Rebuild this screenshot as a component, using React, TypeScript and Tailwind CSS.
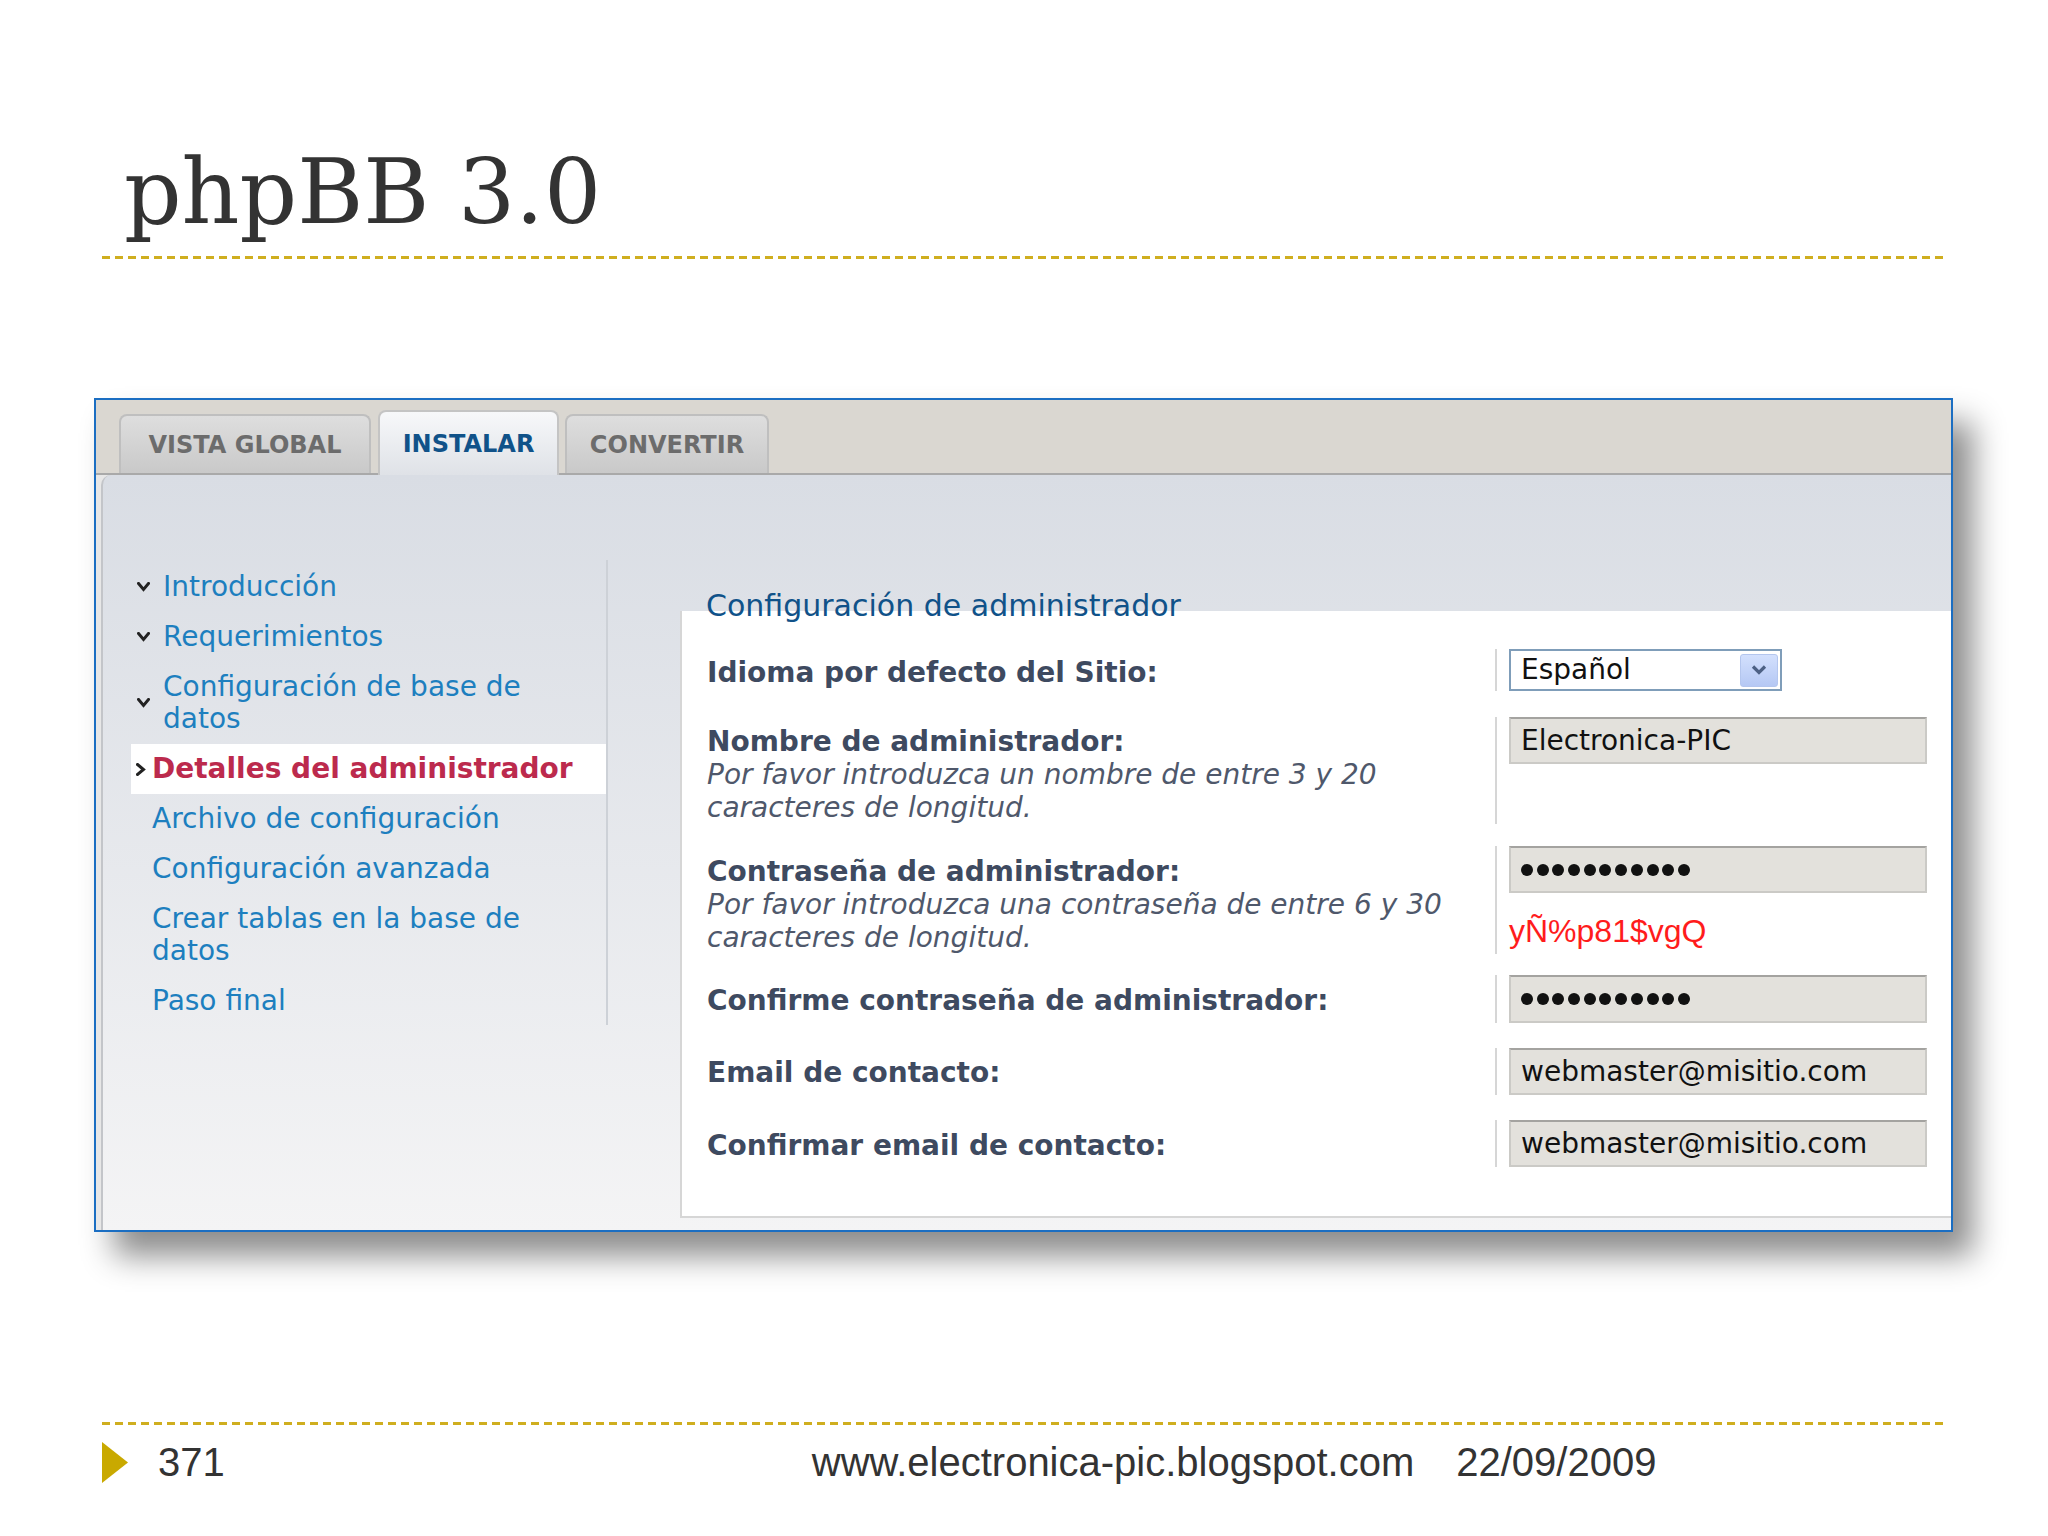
import React from "react";

const ui = "font-['DejaVu_Sans',Verdana,sans-serif]";

function ChevronDown() {
  return (
    <svg width="13" height="10" viewBox="0 0 13 10" className="shrink-0">
      <path d="M1.5 1.5 L6.5 7.5 L11.5 1.5" fill="none" stroke="#222" strokeWidth="3" strokeLinecap="square" />
    </svg>
  );
}

function ChevronRight() {
  return (
    <svg width="10" height="13" viewBox="0 0 10 13" className="shrink-0">
      <path d="M1.5 1.5 L7.5 6.5 L1.5 11.5" fill="none" stroke="#222" strokeWidth="3" strokeLinecap="square" />
    </svg>
  );
}

type MenuItem = { lines: string[]; kind: "done" | "active" | "todo" };

const menu: MenuItem[] = [
  { lines: ["Introducción"], kind: "done" },
  { lines: ["Requerimientos"], kind: "done" },
  { lines: ["Configuración de base de", "datos"], kind: "done" },
  { lines: ["Detalles del administrador"], kind: "active" },
  { lines: ["Archivo de configuración"], kind: "todo" },
  { lines: ["Configuración avanzada"], kind: "todo" },
  { lines: ["Crear tablas en la base de", "datos"], kind: "todo" },
  { lines: ["Paso final"], kind: "todo" },
];

function Dots() {
  return (
    <div className="flex items-center gap-[3.7px]">
      {Array.from({ length: 11 }).map((_, i) => (
        <span key={i} className="block h-[12px] w-[12px] rounded-full bg-[#111]" />
      ))}
    </div>
  );
}

function TextBox({ children, h = "h-[47px]" }: { children: React.ReactNode; h?: string }) {
  return (
    <div
      className={`flex w-[418px] items-center border-2 border-[#cbcac6] border-t-[#a4a3a0] bg-[#e3e1dc] pl-[10px] text-[28px] leading-none text-[#111] ${h}`}
    >
      {children}
    </div>
  );
}

function Row({
  label,
  help,
  labelPad,
  mt,
  children,
}: {
  label: string;
  help?: string[];
  labelPad: string;
  mt: string;
  children: React.ReactNode;
}) {
  return (
    <div className={`flex ${mt}`}>
      <div className={`flex-1 pl-[25px] ${labelPad}`}>
        <div className="text-[28px] font-bold leading-[32px] text-[#3e4a60]">{label}</div>
        {help?.map((l) => (
          <div key={l} className="text-[28px] italic leading-[33px] text-[#4f586b]">
            {l}
          </div>
        ))}
      </div>
      <div className="w-[456px] border-l-2 border-[#d6d6d6] pl-[12px] pr-[24px]">{children}</div>
    </div>
  );
}

export default function App() {
  return (
    <div className="flex h-[1536px] w-[2048px] flex-col overflow-hidden bg-white">
      <div className="mt-[142px] pl-[124px] font-['DejaVu_Serif',serif] text-[90px] leading-[100px] text-[#333]">
        phpBB 3.0
      </div>
      <div className="ml-[102px] mt-[14px] h-[3px] w-[1844px] bg-[repeating-linear-gradient(90deg,#cfae1f_0px,#cfae1f_8px,transparent_8px,transparent_13px)]" />

      {/* installer window */}
      <div
        className={`ml-[94px] mt-[139px] flex h-[834px] w-[1859px] flex-col border-2 border-[#1b6ec2] shadow-[20px_24px_30px_rgba(0,0,0,0.45)] ${ui}`}
      >
        <div className="flex h-[75px] items-end gap-[7px] border-b-2 border-[#a9a9a9] bg-[#dad7d1] pl-[23px]">
          <div className="flex h-[59px] w-[252px] items-center justify-center rounded-t-[8px] border-2 border-b-0 border-[#bfbfbf] bg-gradient-to-b from-[#dedede] to-[#c9c9c9] text-[24px] font-bold text-[#6c6c6c]">
            VISTA GLOBAL
          </div>
          <div className="relative z-10 -mb-[2px] flex h-[65px] w-[181px] items-center justify-center rounded-t-[8px] border-2 border-b-0 border-[#c4c4c4] bg-gradient-to-b from-[#f7f8fa] to-[#dfe2e7] text-[24px] font-bold text-[#105289]">
            INSTALAR
          </div>
          <div className="-ml-[1px] flex h-[59px] w-[204px] items-center justify-center rounded-t-[8px] border-2 border-b-0 border-[#bfbfbf] bg-gradient-to-b from-[#dedede] to-[#c9c9c9] text-[24px] font-bold text-[#6c6c6c]">
            CONVERTIR
          </div>
        </div>

        <div className="flex flex-1 bg-[#e7e7e7] pl-[5px]">
          <div className="flex flex-1 rounded-tl-[10px] border-l-2 border-[#c3c5c9] bg-gradient-to-b from-[#d9dde4] to-[#f4f4f5]">
            {/* left menu */}
            <div className="w-[505px] pl-[28px] pt-[85px]">
              <div className="h-[465px] border-r-2 border-[#cdd1d7] pt-[2px]">
                {menu.map((m) => {
                  if (m.kind === "active") {
                    return (
                      <div key={m.lines[0]} className="flex items-center bg-white py-[9px] pl-[5px]">
                        <ChevronRight />
                        <span className="ml-[6px] whitespace-nowrap text-[28px] font-bold leading-[32px] text-[#bc2a4d]">
                          {m.lines[0]}
                        </span>
                      </div>
                    );
                  }
                  if (m.kind === "done") {
                    return (
                      <div key={m.lines[0]} className="flex items-center py-[9px] pl-[6px]">
                        <ChevronDown />
                        <span className="ml-[13px] whitespace-nowrap text-[28px] leading-[32px] text-[#1d7fbf]">
                          {m.lines.map((l, i) => (
                            <span key={i} className="block">
                              {l}
                            </span>
                          ))}
                        </span>
                      </div>
                    );
                  }
                  return (
                    <div key={m.lines[0]} className="whitespace-nowrap py-[9px] pl-[21px] text-[28px] leading-[32px] text-[#1d7fbf]">
                      {m.lines.map((l, i) => (
                        <span key={i} className="block">
                          {l}
                        </span>
                      ))}
                    </div>
                  );
                })}
              </div>
            </div>

            {/* right form */}
            <div className="flex flex-1 flex-col pl-[72px] pt-[113px]">
              <div className="relative z-10 -mb-[13px] pl-[26px] text-[30px] leading-[36px] text-[#105289]">
                Configuración de administrador
              </div>
              <div className="h-[607px] border-b-2 border-l-2 border-[#d6d6d6] bg-white pt-[38px]">
                <Row label="Idioma por defecto del Sitio:" labelPad="pt-[8px]" mt="mt-0">
                  <div className="flex h-[42px] w-[273px] items-center justify-between border-2 border-[#7f9db9] bg-white pl-[10px] pr-[2px]">
                    <span className="text-[28px] leading-none text-[#111]">Español</span>
                    <span className="flex h-[33px] w-[38px] items-center justify-center rounded-[3px] border border-[#b4c6ee] bg-gradient-to-b from-[#d3e0fd] to-[#b5c8f4]">
                      <svg width="18" height="12" viewBox="0 0 18 12">
                        <path d="M3 2.5 L9 8.5 L15 2.5" fill="none" stroke="#4d6185" strokeWidth="3.2" />
                      </svg>
                    </span>
                  </div>
                </Row>
                <Row
                  label="Nombre de administrador:"
                  help={["Por favor introduzca un nombre de entre 3 y 20", "caracteres de longitud."]}
                  labelPad="pt-[9px]"
                  mt="mt-[26px]"
                >
                  <TextBox>Electronica-PIC</TextBox>
                </Row>
                <Row
                  label="Contraseña de administrador:"
                  help={["Por favor introduzca una contraseña de entre 6 y 30", "caracteres de longitud."]}
                  labelPad="pt-[10px]"
                  mt="mt-[22px]"
                >
                  <TextBox>
                    <Dots />
                  </TextBox>
                  <div className="mt-[20px] font-['Liberation_Sans',Arial,sans-serif] text-[32px] leading-[36px] text-[#ff1c1c]">
                    yÑ%p81$vgQ
                  </div>
                </Row>
                <Row label="Confirme contraseña de administrador:" labelPad="pt-[10px]" mt="mt-[21px]">
                  <TextBox h="h-[48px]">
                    <Dots />
                  </TextBox>
                </Row>
                <Row label="Email de contacto:" labelPad="pt-[9px]" mt="mt-[25px]">
                  <TextBox>webmaster@misitio.com</TextBox>
                </Row>
                <Row label="Confirmar email de contacto:" labelPad="pt-[10px]" mt="mt-[25px]">
                  <TextBox>webmaster@misitio.com</TextBox>
                </Row>
              </div>
            </div>
          </div>
        </div>
      </div>

      <div className="ml-[102px] mt-[190px] h-[3px] w-[1844px] bg-[repeating-linear-gradient(90deg,#cfae1f_0px,#cfae1f_8px,transparent_8px,transparent_13px)]" />
      <div className="ml-[102px] mt-[16px] flex h-[42px] items-center font-['Liberation_Sans',Arial,sans-serif] text-[40px] text-[#333]">
        <svg width="26" height="41" viewBox="0 0 26 41" className="shrink-0">
          <polygon points="0,0 26,20.5 0,41" fill="#c9a900" />
        </svg>
        <span className="ml-[30px]">371</span>
        <span className="ml-[587px]">www.electronica-pic.blogspot.com</span>
        <span className="ml-[42px]">22/09/2009</span>
      </div>
    </div>
  );
}
